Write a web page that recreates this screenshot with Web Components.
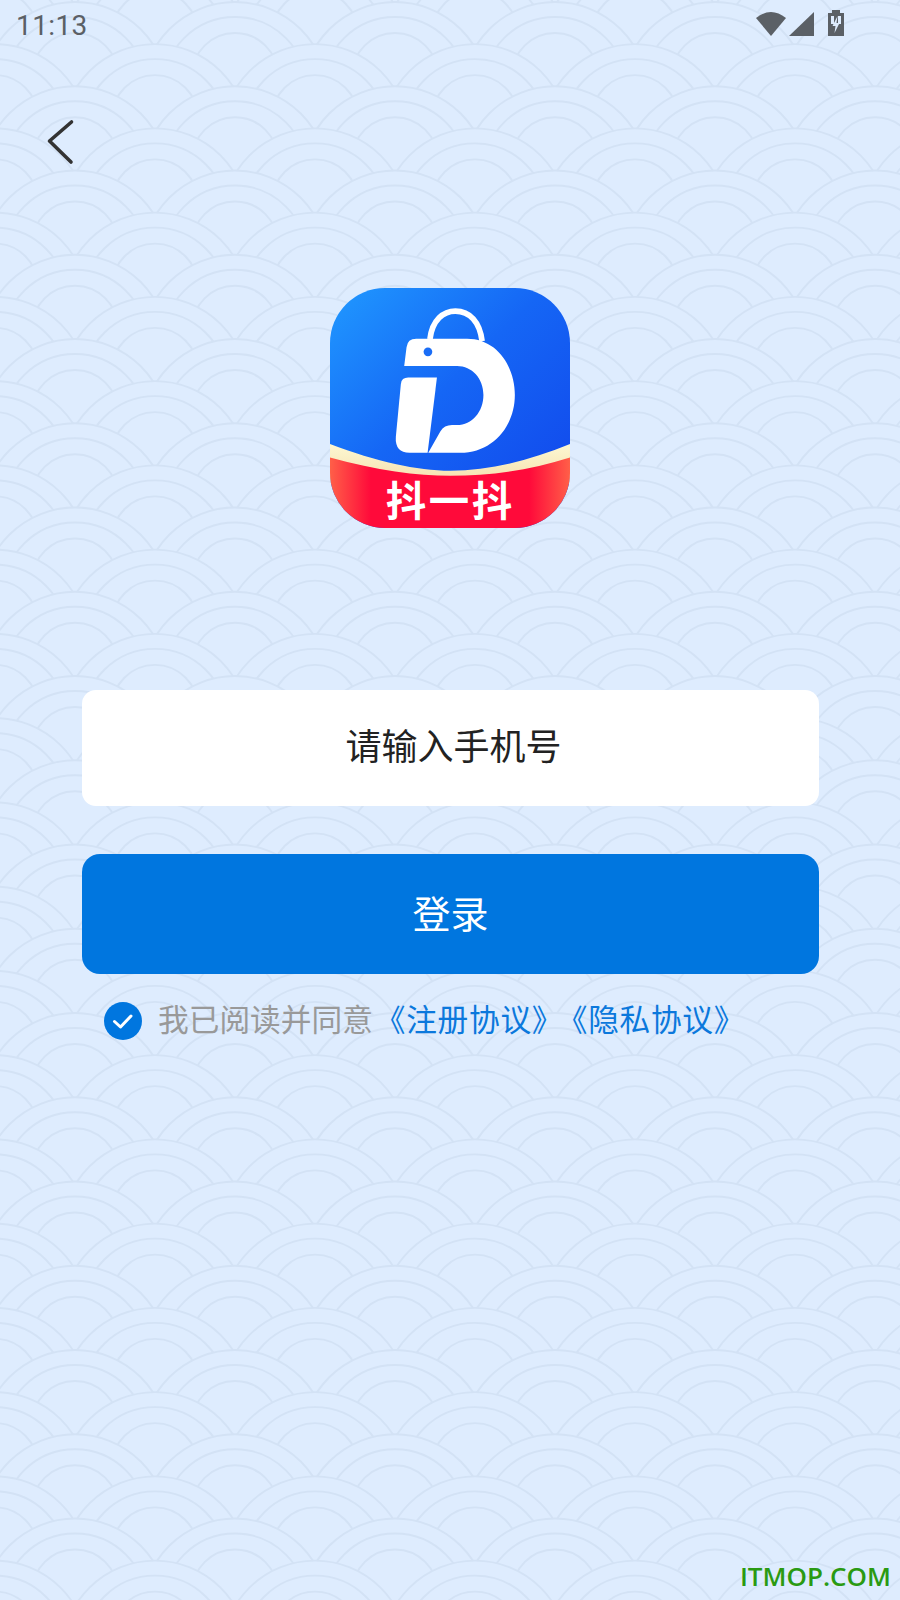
<!DOCTYPE html>
<html lang="zh">
<head>
<meta charset="utf-8">
<title>登录</title>
<style>
    html, body { margin: 0; padding: 0; }
    body { font-family: "Noto Sans CJK SC", "Noto Sans", sans-serif; }
</style>
</head>
<body>
<login-page>
    <status-bar></status-bar>
    <back-button></back-button>
    <app-logo></app-logo>
    <phone-field>请输入手机号</phone-field>
    <login-button>登录</login-button>
    <agree-row>我已阅读并同意<span slot="links">《注册协议》</span><span slot="links" class="second">《隐私协议》</span></agree-row>
</login-page>

<script>
class SealBackground extends HTMLElement {
    constructor(){
        super();
        this.attachShadow({mode:"open"});
    }
    connectedCallback(){
        var rows = "";
        // later rows paint over the lower half of the earlier ones
        for(var r = -4; r < 40; r++){
            var y0 = 2 + r * 42.125;
            var shift = (r % 2 === 0) ? 75 : -5;
            for(var c = -1; c < 7; c++){
                var cx = shift + c * 160;
                rows += `<circle class="o" cx="${cx}" cy="${y0 + 93}" r="93"/>`
                      + `<circle class="l" cx="${cx}" cy="${y0 + 87}" r="72"/>`
                      + `<circle class="l" cx="${cx}" cy="${y0 + 74}" r="43"/>`;
            }
        }
        this.shadowRoot.innerHTML = `
        <style>
            :host{ position:absolute; inset:0; display:block; overflow:hidden; background:#deecfe; }
            svg{ display:block; filter:blur(.45px); }
            circle{ stroke:#d3e2f5; stroke-width:1.9; }
            .o{ fill:#deecfe; }
            .l{ fill:none; }
        </style>
        <svg width="900" height="1600" viewBox="0 0 900 1600">${rows}</svg>`;
    }
}

class LoginPage extends HTMLElement {
    constructor(){
        super();
        this.attachShadow({mode:"open"});
        this.shadowRoot.innerHTML = `
        <style>
            :host{ position:relative; display:block; width:900px; height:1600px; overflow:hidden; }
            main{
                position:relative;
                display:flex;
                flex-direction:column;
                height:100%;
            }
            .mark{
                position:absolute;
                right:9px;
                bottom:7px;
                font:600 26px "Open Sans", sans-serif;
                line-height:34px;
                color:#2a9a12;
            }
        </style>
        <seal-background></seal-background>
        <main><slot></slot></main>
        <div class="mark">ITMOP.COM</div>`;
    }
}

class StatusBar extends HTMLElement {
    constructor(){
        super();
        this.attachShadow({mode:"open"});
        this.shadowRoot.innerHTML = `
        <style>
            :host{
                display:flex;
                align-items:flex-start;
                justify-content:space-between;
                box-sizing:border-box;
                height:50px;
                padding:0 56px 0 16px;
                font:400 28px Roboto, sans-serif;
                color:#5b6066;
            }
            .time{ line-height:52px; letter-spacing:.4px; }
            svg{ display:block; margin-top:9px; }
        </style>
        <div class="time">11:13</div>
        <svg width="88" height="28" viewBox="0 0 88 28">
            <path fill="#5b6066" d="M0 9 Q15 -3 30 9 L15 27 Z"/>
            <path fill="#5b6066" d="M33 27 L58 3 V27 Z"/>
            <path fill="#5b6066" d="M76 1 H84 V4 H88 V27 H72 V4 H76 Z"/>
            <path fill="#deecfe" d="M75 7 H78 V15 H75 Z M85 7 H82 V15 H85 Z"/>
            <path fill="#deecfe" d="M81.5 7 L76.5 17 H79.5 L78.5 24 L83.5 14 H80.5 Z"/>
        </svg>`;
    }
}

class BackButton extends HTMLElement {
    constructor(){
        super();
        this.attachShadow({mode:"open"});
        this.shadowRoot.innerHTML = `
        <style>
            :host{ display:block; box-sizing:border-box; height:238px; padding-left:46px; padding-top:68px; }
            svg{ display:block; }
        </style>
        <svg width="30" height="48" viewBox="0 0 30 48">
            <path d="M25.5 4 L3.5 23 L25 44" fill="none" stroke="#333" stroke-width="3.6" stroke-linecap="round" stroke-linejoin="round"/>
        </svg>`;
    }
}

class AppLogo extends HTMLElement {
    constructor(){
        super();
        this.attachShadow({mode:"open"});
        this.shadowRoot.innerHTML = `
        <style>
            :host{ display:flex; justify-content:center; height:402px; }
            svg{ display:block; }
            text{ font:700 121px "Noto Sans CJK SC", sans-serif; fill:#fff; }
        </style>
        <svg width="240" height="240" viewBox="60 55 718 718">
            <defs>
                <linearGradient id="blue" x1="0" y1="0" x2="1" y2="1">
                    <stop offset="0" stop-color="#2099ff"/>
                    <stop offset=".45" stop-color="#1566f5"/>
                    <stop offset="1" stop-color="#1143ea"/>
                </linearGradient>
                <linearGradient id="red" x1="0" y1="0" x2="1" y2="0">
                    <stop offset="0" stop-color="#ff5f48"/>
                    <stop offset=".17" stop-color="#ff0a3a"/>
                    <stop offset=".83" stop-color="#ff0a3a"/>
                    <stop offset="1" stop-color="#ff5f48"/>
                </linearGradient>
                <linearGradient id="cream" x1="0" y1="0" x2="0" y2="1">
                    <stop offset="0" stop-color="#fdf8d2"/>
                    <stop offset="1" stop-color="#f5dfae"/>
                </linearGradient>
                <clipPath id="box"><rect x="60" y="55" width="718" height="718" rx="165"/></clipPath>
            </defs>
            <g clip-path="url(#box)">
                <rect x="60" y="55" width="718" height="718" fill="url(#blue)"/>
                <path fill="url(#cream)" d="M60 522 C200 575 320 602 420 602 C540 602 660 570 778 522 V640 H60 Z"/>
                <path fill="url(#red)" d="M60 562 C200 600 320 617 420 617 C540 617 660 600 778 562 V773 H60 Z"/>
            </g>
            <path d="M359 208 C366 150 400 124 435 124 C478 124 508 156 515 214" fill="none" stroke="#fff" stroke-width="17"/>
            <path fill="#fff" d="M282 288 L289 232 Q292 207 318 207 H470 C560 207 613 290 613 375 C613 470 545 548 450 548 H354 L390 484 Q402 465 425 465 H440 C485 465 519 425 519 375 C519 325 485 288 440 288 Z"/>
            <circle cx="353" cy="246" r="13" fill="#1a6df6"/>
            <path fill="#fff" d="M294 323 H380 L352 548 H298 Q254 548 257 500 L272 342 Q274 323 294 323 Z"/>
            <text x="420" y="738" text-anchor="middle" letter-spacing="8">抖一抖</text>
        </svg>`;
    }
}

class PhoneField extends HTMLElement {
    constructor(){
        super();
        this.attachShadow({mode:"open"});
        this.shadowRoot.innerHTML = `
        <style>
            :host{
                display:flex;
                align-items:center;
                justify-content:center;
                box-sizing:border-box;
                height:116px;
                margin:0 81px 0 82px;
                padding:0 0 8px 6px;
                background:#fff;
                border-radius:14px;
                font-size:36px;
                color:#222;
            }
        </style>
        <slot></slot>`;
    }
}

class LoginButton extends HTMLElement {
    constructor(){
        super();
        this.attachShadow({mode:"open"});
        this.shadowRoot.innerHTML = `
        <style>
            :host{
                display:flex;
                align-items:center;
                justify-content:center;
                box-sizing:border-box;
                height:120px;
                margin:48px 81px 0 82px;
                padding-bottom:6px;
                background:#0076df;
                border-radius:18px;
                font-size:38px;
                color:#fff;
            }
        </style>
        <slot></slot>`;
    }
}

class AgreeRow extends HTMLElement {
    constructor(){
        super();
        this.attachShadow({mode:"open"});
        this.shadowRoot.innerHTML = `
        <style>
            :host{
                display:flex;
                align-items:center;
                gap:16px;
                margin:28px 0 0 104px;
                height:38px;
                font-size:30.7px;
                color:#999;
            }
            .links{ color:#0b78dc; margin-left:2px; letter-spacing:.7px; }
            ::slotted(.second){ margin-left:9px; }
            svg{ display:block; flex:none; }
            .text{ white-space:nowrap; padding-bottom:8px; }
        </style>
        <svg width="38" height="38" viewBox="0 0 38 38">
            <circle cx="19" cy="19" r="19" fill="#0076df"/>
            <path d="M10.5 19.5 L16.5 25 L27 14" fill="none" stroke="#fff" stroke-width="3" stroke-linecap="round" stroke-linejoin="round"/>
        </svg>
        <div class="text"><slot></slot><span class="links"><slot name="links"></slot></span></div>`;
    }
}

customElements.define("seal-background", SealBackground);
customElements.define("login-page", LoginPage);
customElements.define("status-bar", StatusBar);
customElements.define("back-button", BackButton);
customElements.define("app-logo", AppLogo);
customElements.define("phone-field", PhoneField);
customElements.define("login-button", LoginButton);
customElements.define("agree-row", AgreeRow);
</script>
</body>
</html>
